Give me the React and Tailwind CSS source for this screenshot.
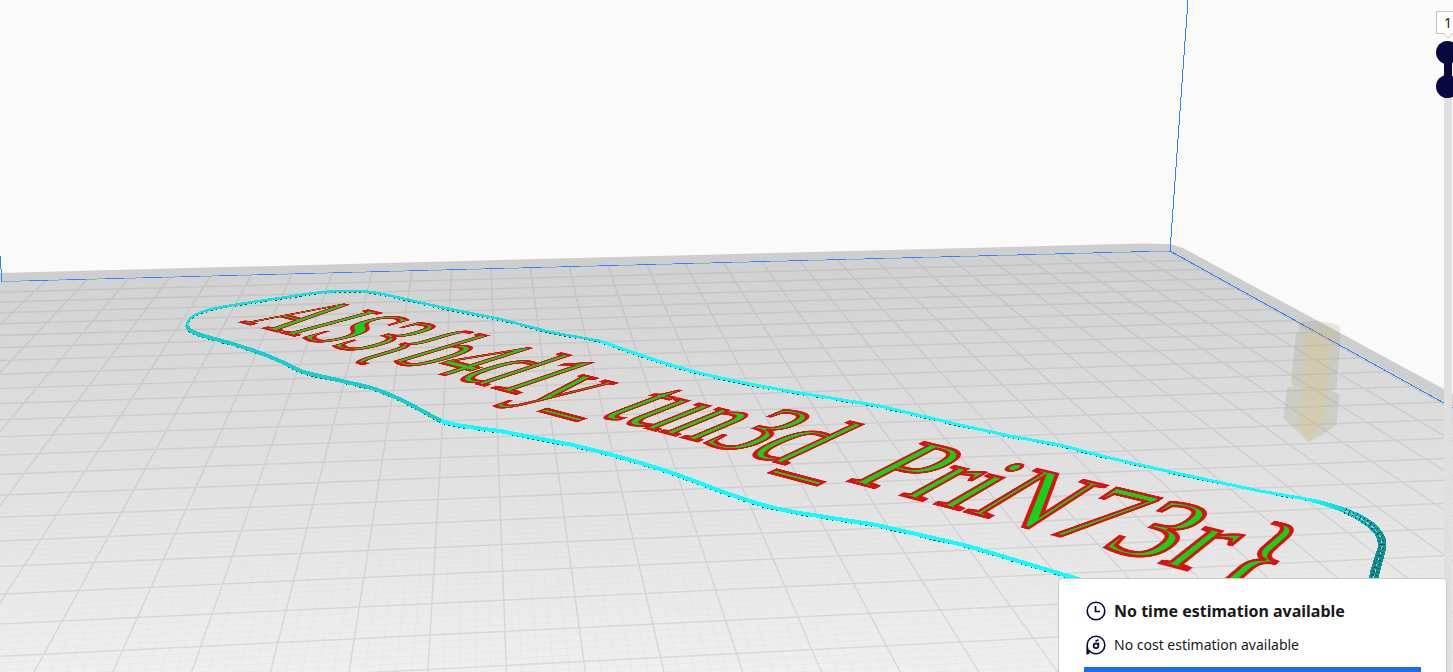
import React from "react";

/* Perspective projection of the build plate: (i, j) are 10 mm grid cells,
   i along the back edge, j towards the camera. */
const P = 0.002618;
const Q = -0.02318;
const VI = [16030, -135];
const VJ = [475.7, -135];
const O = [3, 282.4];

function project(i, j) {
  const w = 1 + P * i + Q * j;
  return [
    (O[0] + VI[0] * P * i + VJ[0] * Q * j) / w,
    (O[1] + VI[1] * P * i + VJ[1] * Q * j) / w,
  ];
}

function segment(a, b) {
  const [x1, y1] = project(a[0], a[1]);
  const [x2, y2] = project(b[0], b[1]);
  return `M${x1.toFixed(1)} ${y1.toFixed(1)}L${x2.toFixed(1)} ${y2.toFixed(1)}`;
}

const range = (from, to, step) => {
  const out = [];
  for (let k = from; k <= to + 1e-6; k += step) out.push(k);
  return out;
};

const lines = (step) =>
  range(step, 30, step)
    .map((k) => segment([k, -0.1], [k, 30]) + segment([0, k], [30, k]))
    .join("");

const MAJOR = lines(1);
const MINOR = lines(0.2);

/* Places a flat 100px line of text on the plate, turned by 45 degrees,
   starting `start` cells along its baseline. */
function plateMatrix(start) {
  const r = Math.SQRT1_2;
  const sx = 0.019;
  const sy = 0.0382;
  const t0 = 1.31 + 83.75 * sy;
  const i = [r * sx, -r * sy, r * (start + t0)];
  const j = [r * sx, r * sy, r * (start - t0)];
  const row = (ci, cj, c) => [0, 1, 2].map((k) => ci * i[k] + cj * j[k] + (k === 2 ? c : 0));
  const X = row(VI[0] * P, VJ[0] * Q, O[0]);
  const Y = row(VI[1] * P, VJ[1] * Q, O[1]);
  const W = row(P, Q, 1);
  const n = W[2];
  const m = [X[0], Y[0], 0, W[0], X[1], Y[1], 0, W[1], 0, 0, n, 0, X[2], Y[2], 0, W[2]];
  return `matrix3d(${m.map((v) => (v / n).toFixed(9)).join(",")})`;
}

const PARTS = [
  { text: "AIS3{b4d1y_", start: 7.6 },
  { text: "tun3d_", start: 18.27 },
  { text: "PriN73r}", start: 23.78 },
];

const SKIRT_TOP =
  "M187 325C187 318 196 313 212 309C240 303 270 300 300 295C325 291 340 290.500 356 291C376 291 395 297 440 307L500 319L550 332L600 341C640 355 670 366 700 373C730 381 765 387 800 393L880 406L960 425L1010 436L1060 445L1110 458L1180 474L1260 491L1312 500";
const SKIRT_FRONT =
  "M600 341C640 355 670 366 700 373C730 381 765 387 800 393L880 406L960 425L1010 436L1060 445L1110 458L1180 474L1260 491L1312 500";
const SKIRT_BOTTOM =
  "M439 420C448 424 460 426 500 431L573 445C610 454 640 462 669 472C700 482 712 489 738 497C760 505 775 509 800 513L877 525L964 545C1010 558 1040 568 1075 578L1110 589";
const SKIRT_LEFT =
  "M187 325C188 332 197 334 215 339C250 348 275 357 300 371C325 378 350 382 375 389C402 398 420 410 441 421";
const SKIRT_RIGHT =
  "M1310 498C1338 504 1360 512 1373 522C1384 531 1388 539 1386 549C1383 562 1378 574 1377 592H1367C1368 574 1373 562 1377 550C1380 540 1375 533 1366 526C1352 515 1332 507 1310 502Z";
const SKIRT_RIGHT_MID = "M1345 511C1368 520 1384 534 1382 547C1379 560 1373 572 1372 592";

function Scene() {
  return (
    <svg className="absolute inset-0 h-full w-full" aria-hidden="true">
      <defs>
        <linearGradient id="plate" gradientUnits="userSpaceOnUse" x1="0" y1="250" x2="0" y2="672">
          <stop offset="0" stopColor="#d0d0d0" />
          <stop offset="0.35" stopColor="#dcdcdc" />
          <stop offset="1" stopColor="#efefef" />
        </linearGradient>
        <linearGradient id="minor" gradientUnits="userSpaceOnUse" x1="0" y1="320" x2="0" y2="672">
          <stop offset="0" stopColor="#000" stopOpacity="0" />
          <stop offset="1" stopColor="#000" stopOpacity="0.025" />
        </linearGradient>
        <linearGradient id="skirtEnd" gradientUnits="userSpaceOnUse" x1="1310" y1="500" x2="1385" y2="545">
          <stop offset="0" stopColor="#12fbff" />
          <stop offset="1" stopColor="#128f92" />
        </linearGradient>
      </defs>
      <path d="M-20 273.500L1140 243.500L1170 244L1183 248L1453 394L2600 1010V1400H-20Z" fill="#cecece" />
      <path d="M3 281.500L1170 251L2900 1200V1400H-1500Z" fill="url(#plate)" />
      <path d={MINOR} fill="none" stroke="url(#minor)" />
      <path d={MAJOR} fill="none" stroke="#000" strokeOpacity="0.065" strokeWidth="1.600" />

      <g fill="none" shapeRendering="crispEdges">
        <path d="M2 281.500L1170 251" stroke="#8aabdc" />
        <path d="M29 280.800L1170 251" stroke="#3282ff" strokeDasharray="19 19" />
        <path d="M1170 251L1453 408" stroke="#3282ff" />
        <path d="M1188 0L1170 251M0 256L2 282" stroke="#3282ff" />
      </g>

      <g fill="none" strokeLinejoin="round" shapeRendering="crispEdges">
        <path d={SKIRT_TOP} stroke="#0b5a5c" strokeWidth="2" strokeDasharray="2 3" transform="translate(0 1)" />
        <path d={SKIRT_TOP} stroke="#12dfe2" strokeWidth="2.500" />
        <path d={SKIRT_FRONT} stroke="#12fbff" strokeWidth="3" />
        <path d={SKIRT_BOTTOM} stroke="#0b5a5c" strokeWidth="3" strokeDasharray="2 3" transform="translate(0 1)" />
        <path d={SKIRT_BOTTOM} stroke="#12fbff" strokeWidth="4" />
        <path d={SKIRT_LEFT} stroke="#0b5a5c" strokeWidth="3" strokeDasharray="2 3" transform="translate(0 1)" />
        <path d={SKIRT_LEFT} stroke="#16cdd0" strokeWidth="4" />
        <path d={SKIRT_RIGHT} fill="url(#skirtEnd)" />
        <path d={SKIRT_RIGHT_MID} stroke="#0a5557" strokeWidth="6" strokeDasharray="1 3" />
        <path d={SKIRT_RIGHT_MID} stroke="#9fd6d6" strokeDasharray="3 3" />
      </g>

      <g transform="translate(1150 230) scale(.3333)">
        <path d="M447 276L500 272L550 280L570 290L572 320L560 475L545 482L430 468L423 455L438 310L447 306Z" fill="#8a8250" fillOpacity=".16" />
        <path d="M412 472L490 470L545 482L568 492L560 585L520 612L475 636L400 565Z" fill="#8a8250" fillOpacity=".16" />
        <path d="M470 298L545 298L527 490L517 580L480 636L470 636L443 585L457 470Z" fill="#e2c878" fillOpacity=".25" />
      </g>
    </svg>
  );
}

function PlateText() {
  return (
    <p className="font-['Liberation_Serif',serif] text-[100px] leading-[100px] whitespace-nowrap text-[#14d21a] [-webkit-text-stroke:3px_#d81212]">
      {PARTS.map(({ text, start }) => (
        <span key={text} className="absolute top-0 left-0 origin-top-left" style={{ transform: plateMatrix(start) }}>
          {text}
        </span>
      ))}
    </p>
  );
}

function Handle({ label }) {
  return (
    <label className="relative block size-[23px] rounded-full bg-[#08073f]">
      <input type="range" min="1" max="1" defaultValue="1" aria-label={label} className="absolute inset-0 size-full cursor-pointer opacity-0" />
    </label>
  );
}

function LayerSlider() {
  return (
    <div className="absolute top-[11px] -right-[6px] bottom-0 flex w-[23px] flex-col items-center">
      <div className="relative h-[30px] w-[23px] shrink-0">
        <input
          type="text"
          aria-label="Layer"
          defaultValue="1"
          className="block h-[23px] w-[23px] border border-[#c4c4c4] bg-white pl-[7px] font-['Noto_Sans',sans-serif] text-sm text-[#191919] outline-none"
        />
        <svg className="absolute top-[22px] left-[7px]" width="10" height="6" aria-hidden="true">
          <path d="M0 0L5 5L10 0" fill="#fff" stroke="#c4c4c4" />
        </svg>
      </div>
      <Handle label="Top layer" />
      <div className="-my-1 h-[19px] w-2 shrink-0 bg-[#08073f]" />
      <Handle label="Bottom layer" />
      <div className="-mt-1 w-2 flex-1 bg-[#dfdfdf]" />
    </div>
  );
}

function ClockIcon() {
  return (
    <svg width="20" height="20" viewBox="0 0 20 20" fill="none" stroke="#08073f" aria-hidden="true">
      <circle cx="10" cy="10" r="8.800" strokeWidth="1.600" />
      <path d="M9.500 5V10.500H14" strokeWidth="1.700" />
    </svg>
  );
}

function SpoolIcon() {
  return (
    <svg width="20" height="20" viewBox="0 0 20 20" fill="none" stroke="#08073f" aria-hidden="true">
      <path d="M1.200 19.500V10A8.800 8.800 0 1 1 10 18.800C7 18.800 4.600 17.400 3 15.300" strokeWidth="1.600" />
      <path d="M1.500 12.500L3 19" strokeWidth="1.400" />
      <circle cx="10" cy="10.700" r="2.400" strokeWidth="1.700" />
      <path d="M9.500 6.200L12.500 4.800" strokeWidth="1.600" />
      <path d="M12.600 7.500V9.500" strokeWidth="1.300" />
    </svg>
  );
}

function ActionPanel() {
  return (
    <section className="absolute right-[6px] -bottom-[34px] flex w-[389px] flex-col rounded border border-[#c8c8c8] bg-white px-[25px] pt-[20px] pb-6 font-['Noto_Sans',sans-serif] text-[#191919]">
      <div className="flex h-6 items-center gap-2 pl-0.5">
        <ClockIcon />
        <h2 className="text-base leading-6 font-bold">No time estimation available</h2>
      </div>
      <div className="mt-[10px] flex h-6 items-center gap-2 pl-0.5">
        <SpoolIcon />
        <p className="text-sm leading-6">No cost estimation available</p>
      </div>
      <button type="button" aria-label="Slice" className="mt-[10px] h-[14px] w-full bg-[#196ef0]" />
    </section>
  );
}

export default function App() {
  return (
    <main className="relative h-screen w-full overflow-hidden bg-[#fafafa]">
      <Scene />
      <PlateText />
      <LayerSlider />
      <ActionPanel />
    </main>
  );
}
